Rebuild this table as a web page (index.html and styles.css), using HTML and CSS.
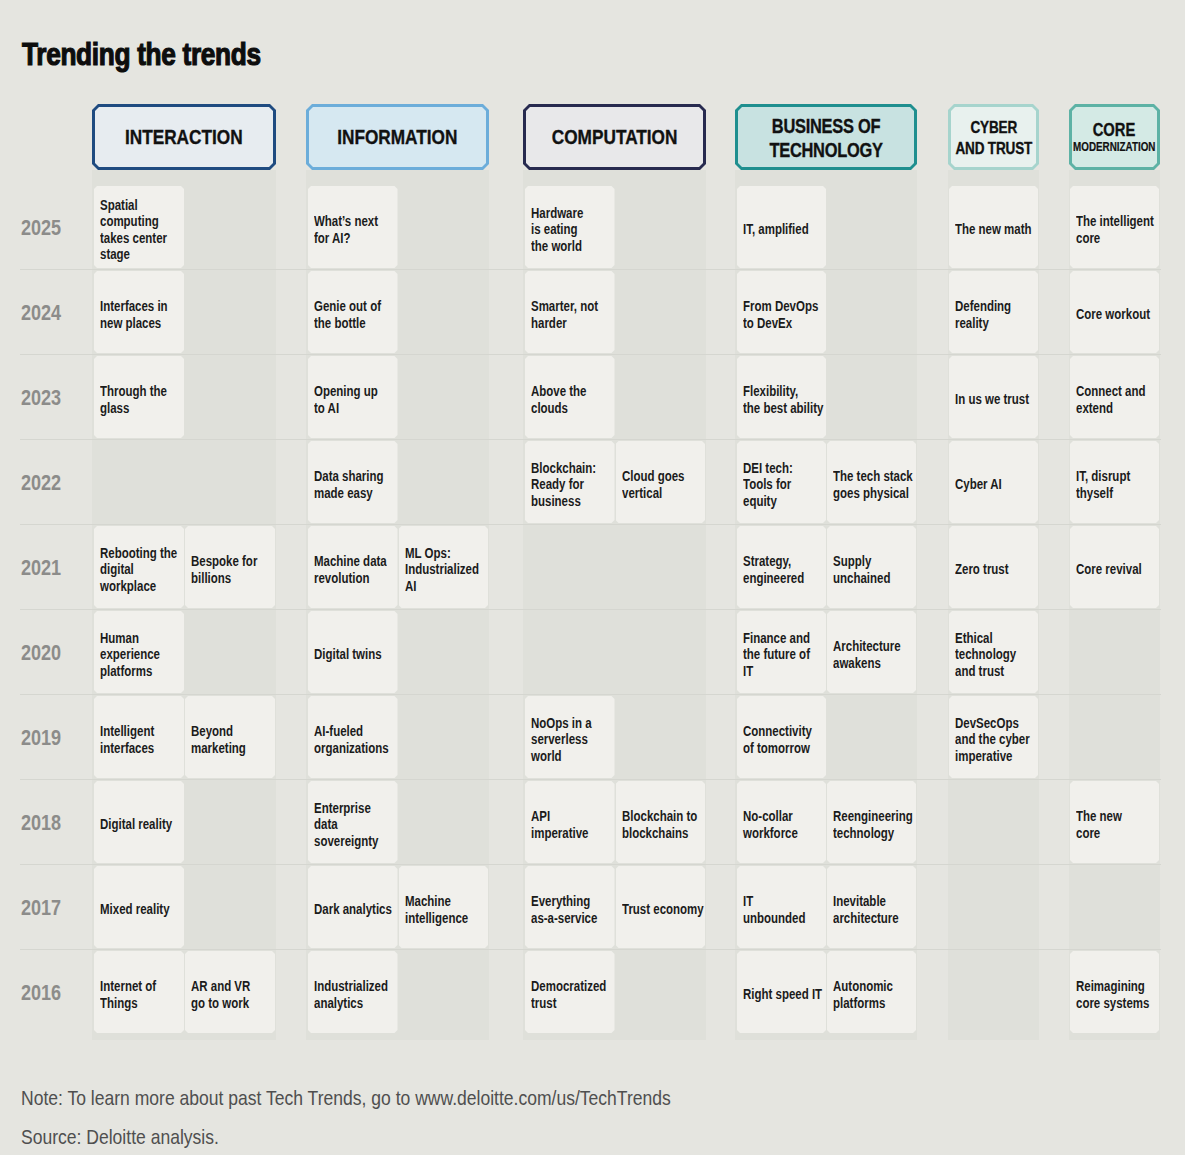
FILE: index.html
```html
<!DOCTYPE html>
<html lang="en">
<head>
<meta charset="utf-8">
<title>Trending the trends</title>
<link rel="stylesheet" href="styles.css">
</head>
<body>
<div class="page">
  <h1 class="title"><span class="nx">Trending the trends</span></h1>

  <div class="table">
    <div class="grid head-row">
      <div></div>
      <div class="head head-interaction"><div class="head-in"><span class="nc">INTERACTION</span></div></div>
      <div class="head head-information"><div class="head-in"><span class="nc">INFORMATION</span></div></div>
      <div class="head head-computation"><div class="head-in"><span class="nc">COMPUTATION</span></div></div>
      <div class="head head-business"><div class="head-in head-two"><span class="nc">BUSINESS OF<br>TECHNOLOGY</span></div></div>
      <div class="head head-cyber"><div class="head-in head-cyber-text"><span class="nc">CYBER<br>AND TRUST</span></div></div>
      <div class="head head-core"><div class="head-in head-core-text"><span class="nc core-big">CORE</span><span class="nc core-small">MODERNIZATION</span></div></div>
    </div>

    <div class="grid spacer spacer-top">
      <div></div><div class="band"></div><div class="band"></div><div class="band"></div><div class="band"></div><div class="band"></div><div class="band"></div>
    </div>

    <div class="grid row">
      <div class="year"><span class="nx">2025</span></div>
      <div class="band"><div class="cell"><span class="nx">Spatial<br>computing<br>takes center<br>stage</span></div></div>
      <div class="band"><div class="cell"><span class="nx">What’s next<br>for AI?</span></div></div>
      <div class="band"><div class="cell"><span class="nx">Hardware<br>is eating<br>the world</span></div></div>
      <div class="band"><div class="cell"><span class="nx">IT, amplified</span></div></div>
      <div class="band band-single"><div class="cell"><span class="nx">The new math</span></div></div>
      <div class="band band-single"><div class="cell"><span class="nx">The intelligent<br>core</span></div></div>
    </div>

    <div class="grid row">
      <div class="year"><span class="nx">2024</span></div>
      <div class="band"><div class="cell"><span class="nx">Interfaces in<br>new places</span></div></div>
      <div class="band"><div class="cell"><span class="nx">Genie out of<br>the bottle</span></div></div>
      <div class="band"><div class="cell"><span class="nx">Smarter, not<br>harder</span></div></div>
      <div class="band"><div class="cell"><span class="nx">From DevOps<br>to DevEx</span></div></div>
      <div class="band band-single"><div class="cell"><span class="nx">Defending<br>reality</span></div></div>
      <div class="band band-single"><div class="cell"><span class="nx">Core workout</span></div></div>
    </div>

    <div class="grid row">
      <div class="year"><span class="nx">2023</span></div>
      <div class="band"><div class="cell"><span class="nx">Through the<br>glass</span></div></div>
      <div class="band"><div class="cell"><span class="nx">Opening up<br>to AI</span></div></div>
      <div class="band"><div class="cell"><span class="nx">Above the<br>clouds</span></div></div>
      <div class="band"><div class="cell"><span class="nx">Flexibility,<br>the best ability</span></div></div>
      <div class="band band-single"><div class="cell"><span class="nx">In us we trust</span></div></div>
      <div class="band band-single"><div class="cell"><span class="nx">Connect and<br>extend</span></div></div>
    </div>

    <div class="grid row">
      <div class="year"><span class="nx">2022</span></div>
      <div class="band"></div>
      <div class="band"><div class="cell"><span class="nx">Data sharing<br>made easy</span></div></div>
      <div class="band"><div class="cell"><span class="nx">Blockchain:<br>Ready for<br>business</span></div><div class="cell"><span class="nx">Cloud goes<br>vertical</span></div></div>
      <div class="band"><div class="cell"><span class="nx">DEI tech:<br>Tools for<br>equity</span></div><div class="cell"><span class="nx">The tech stack<br>goes physical</span></div></div>
      <div class="band band-single"><div class="cell"><span class="nx">Cyber AI</span></div></div>
      <div class="band band-single"><div class="cell"><span class="nx">IT, disrupt<br>thyself</span></div></div>
    </div>

    <div class="grid row">
      <div class="year"><span class="nx">2021</span></div>
      <div class="band"><div class="cell"><span class="nx">Rebooting the<br>digital<br>workplace</span></div><div class="cell"><span class="nx">Bespoke for<br>billions</span></div></div>
      <div class="band"><div class="cell"><span class="nx">Machine data<br>revolution</span></div><div class="cell"><span class="nx">ML Ops:<br>Industrialized<br>AI</span></div></div>
      <div class="band"></div>
      <div class="band"><div class="cell"><span class="nx">Strategy,<br>engineered</span></div><div class="cell"><span class="nx">Supply<br>unchained</span></div></div>
      <div class="band band-single"><div class="cell"><span class="nx">Zero trust</span></div></div>
      <div class="band band-single"><div class="cell"><span class="nx">Core revival</span></div></div>
    </div>

    <div class="grid row">
      <div class="year"><span class="nx">2020</span></div>
      <div class="band"><div class="cell"><span class="nx">Human<br>experience<br>platforms</span></div></div>
      <div class="band"><div class="cell"><span class="nx">Digital twins</span></div></div>
      <div class="band"></div>
      <div class="band"><div class="cell"><span class="nx">Finance and<br>the future of<br>IT</span></div><div class="cell"><span class="nx">Architecture<br>awakens</span></div></div>
      <div class="band band-single"><div class="cell"><span class="nx">Ethical<br>technology<br>and trust</span></div></div>
      <div class="band band-single"></div>
    </div>

    <div class="grid row">
      <div class="year"><span class="nx">2019</span></div>
      <div class="band"><div class="cell"><span class="nx">Intelligent<br>interfaces</span></div><div class="cell"><span class="nx">Beyond<br>marketing</span></div></div>
      <div class="band"><div class="cell"><span class="nx">AI-fueled<br>organizations</span></div></div>
      <div class="band"><div class="cell"><span class="nx">NoOps in a<br>serverless<br>world</span></div></div>
      <div class="band"><div class="cell"><span class="nx">Connectivity<br>of tomorrow</span></div></div>
      <div class="band band-single"><div class="cell"><span class="nx">DevSecOps<br>and the cyber<br>imperative</span></div></div>
      <div class="band band-single"></div>
    </div>

    <div class="grid row">
      <div class="year"><span class="nx">2018</span></div>
      <div class="band"><div class="cell"><span class="nx">Digital reality</span></div></div>
      <div class="band"><div class="cell"><span class="nx">Enterprise<br>data<br>sovereignty</span></div></div>
      <div class="band"><div class="cell"><span class="nx">API<br>imperative</span></div><div class="cell"><span class="nx">Blockchain to<br>blockchains</span></div></div>
      <div class="band"><div class="cell"><span class="nx">No-collar<br>workforce</span></div><div class="cell"><span class="nx">Reengineering<br>technology</span></div></div>
      <div class="band band-single"></div>
      <div class="band band-single"><div class="cell"><span class="nx">The new<br>core</span></div></div>
    </div>

    <div class="grid row">
      <div class="year"><span class="nx">2017</span></div>
      <div class="band"><div class="cell"><span class="nx">Mixed reality</span></div></div>
      <div class="band"><div class="cell"><span class="nx">Dark analytics</span></div><div class="cell"><span class="nx">Machine<br>intelligence</span></div></div>
      <div class="band"><div class="cell"><span class="nx">Everything<br>as-a-service</span></div><div class="cell"><span class="nx">Trust economy</span></div></div>
      <div class="band"><div class="cell"><span class="nx">IT<br>unbounded</span></div><div class="cell"><span class="nx">Inevitable<br>architecture</span></div></div>
      <div class="band band-single"></div>
      <div class="band band-single"></div>
    </div>

    <div class="grid row row-last">
      <div class="year"><span class="nx">2016</span></div>
      <div class="band"><div class="cell"><span class="nx">Internet of<br>Things</span></div><div class="cell"><span class="nx">AR and VR<br>go to work</span></div></div>
      <div class="band"><div class="cell"><span class="nx">Industrialized<br>analytics</span></div></div>
      <div class="band"><div class="cell"><span class="nx">Democratized<br>trust</span></div></div>
      <div class="band"><div class="cell"><span class="nx">Right speed IT</span></div><div class="cell"><span class="nx">Autonomic<br>platforms</span></div></div>
      <div class="band band-single"></div>
      <div class="band band-single"><div class="cell"><span class="nx">Reimagining<br>core systems</span></div></div>
    </div>

    <div class="grid spacer spacer-bottom">
      <div></div><div class="band"></div><div class="band"></div><div class="band"></div><div class="band"></div><div class="band"></div><div class="band"></div>
    </div>
  </div>

  <p class="note"><span class="nx nx-note">Note: To learn more about past Tech Trends, go to www.deloitte.com/us/TechTrends</span></p>
  <p class="note"><span class="nx nx-note">Source: Deloitte analysis.</span></p>
</div>
</body>
</html>
```

FILE: styles.css
```css
html, body {
  margin: 0;
  padding: 0;
  background: #e5e5e0;
}

body {
  font-family: "Liberation Sans", Arial, sans-serif;
  color: #1b1b1b;
}

/* narrow rendering of the sans face (Arial Narrow is Arial at 82% width) */
.nx {
  display: inline-block;
  white-space: nowrap;
  transform: scaleX(0.82);
  transform-origin: 0 50%;
}

.nc {
  display: inline-block;
  white-space: nowrap;
  transform: scaleX(0.82);
  transform-origin: 50% 50%;
}

.page {
  width: 1141px;
  padding: 35px 24px 0 20px;
}

.title {
  margin: 0 0 31px 2px;
  font-size: 32px;
  line-height: 38px;
  font-weight: 700;
  letter-spacing: -0.4px;
  color: #0d0d0d;
  -webkit-text-stroke: 1.2px #0d0d0d;
}

/* year column, then six bands separated by gutter tracks */
.grid {
  display: grid;
  grid-template-columns: 72px 184px 30px 183px 34px 183px 29px 182px 31px 91px 30px 91px;
}

.grid > :nth-child(1) { grid-column: 1; }
.grid > :nth-child(2) { grid-column: 2; }
.grid > :nth-child(3) { grid-column: 4; }
.grid > :nth-child(4) { grid-column: 6; }
.grid > :nth-child(5) { grid-column: 8; }
.grid > :nth-child(6) { grid-column: 10; }
.grid > :nth-child(7) { grid-column: 12; }

.head-row {
  height: 66px;
}

.head {
  padding: 3px;
  clip-path: polygon(6px 0, calc(100% - 6px) 0, 100% 6px, 100% calc(100% - 6px), calc(100% - 6px) 100%, 6px 100%, 0 calc(100% - 6px), 0 6px);
}

.head-in {
  height: 100%;
  box-sizing: border-box;
  display: flex;
  flex-direction: column;
  align-items: center;
  justify-content: center;
  text-align: center;
  font-size: 21px;
  line-height: 24px;
  font-weight: 700;
  color: #111;
  -webkit-text-stroke: 0.35px #111;
  clip-path: polygon(4px 0, calc(100% - 4px) 0, 100% 4px, 100% calc(100% - 4px), calc(100% - 4px) 100%, 4px 100%, 0 calc(100% - 4px), 0 4px);
}

.head-interaction { background: #1f4b80; }
.head-interaction .head-in { background: #e7ecf0; }
.head-information { background: #6cadda; }
.head-information .head-in { background: #d6e8f1; }
.head-computation { background: #272a4f; }
.head-computation .head-in { background: #e8e8ea; }
.head-business { background: #1f8f8f; }
.head-business .head-in { background: #c8e2e1; }
.head-cyber { background: #a6d4cd; }
.head-cyber .head-in { background: #e8f1ee; }
.head-core { background: #5db2a5; }
.head-core .head-in { background: #d4eae5; }

.head-two {
  font-size: 20px;
  line-height: 24px;
  letter-spacing: -0.3px;
  padding-top: 2px;
}

.head-cyber-text {
  font-size: 16.5px;
  line-height: 21px;
  letter-spacing: -0.2px;
  padding-top: 1px;
}

.head-core-text {
  padding-top: 1px;
}

.core-big {
  font-size: 18px;
  line-height: 19px;
}

.core-small {
  font-size: 12px;
  line-height: 14px;
  -webkit-text-stroke: 0.2px #111;
}

.band {
  background: #dfe0da;
}

.spacer-top {
  height: 15px;
}

.spacer-bottom {
  height: 6px;
}

.row {
  height: 84px;
  border-bottom: 1px solid #d5d6d0;
}

.row-last {
  border-bottom: none;
}

.row .band {
  display: grid;
  grid-template-columns: minmax(0, 1fr) minmax(0, 1fr);
  column-gap: 1px;
  padding: 1px 1px 1px 2px;
}

.row .band-single {
  grid-template-columns: minmax(0, 1fr);
  padding: 1px;
}

.year {
  display: flex;
  align-items: center;
  padding: 2px 0 0 1px;
  font-size: 22px;
  font-weight: 700;
  color: #8c8c8a;
}

.cell {
  background: #f1f0ec;
  display: flex;
  align-items: center;
  min-width: 0;
  overflow: hidden;
  padding: 5px 2px 0 6px;
  font-size: 14px;
  line-height: 16.3px;
  font-weight: 700;
  color: #1b1b1b;
  clip-path: polygon(3px 0, calc(100% - 3px) 0, 100% 3px, 100% calc(100% - 3px), calc(100% - 3px) 100%, 3px 100%, 0 calc(100% - 3px), 0 3px);
}

.note {
  margin: 46px 0 0 1px;
  font-size: 21px;
  line-height: 24px;
  color: #4f4f4f;
}

.nx-note {
  transform: scaleX(0.835);
}

.note + .note {
  margin-top: 15px;
}
```
